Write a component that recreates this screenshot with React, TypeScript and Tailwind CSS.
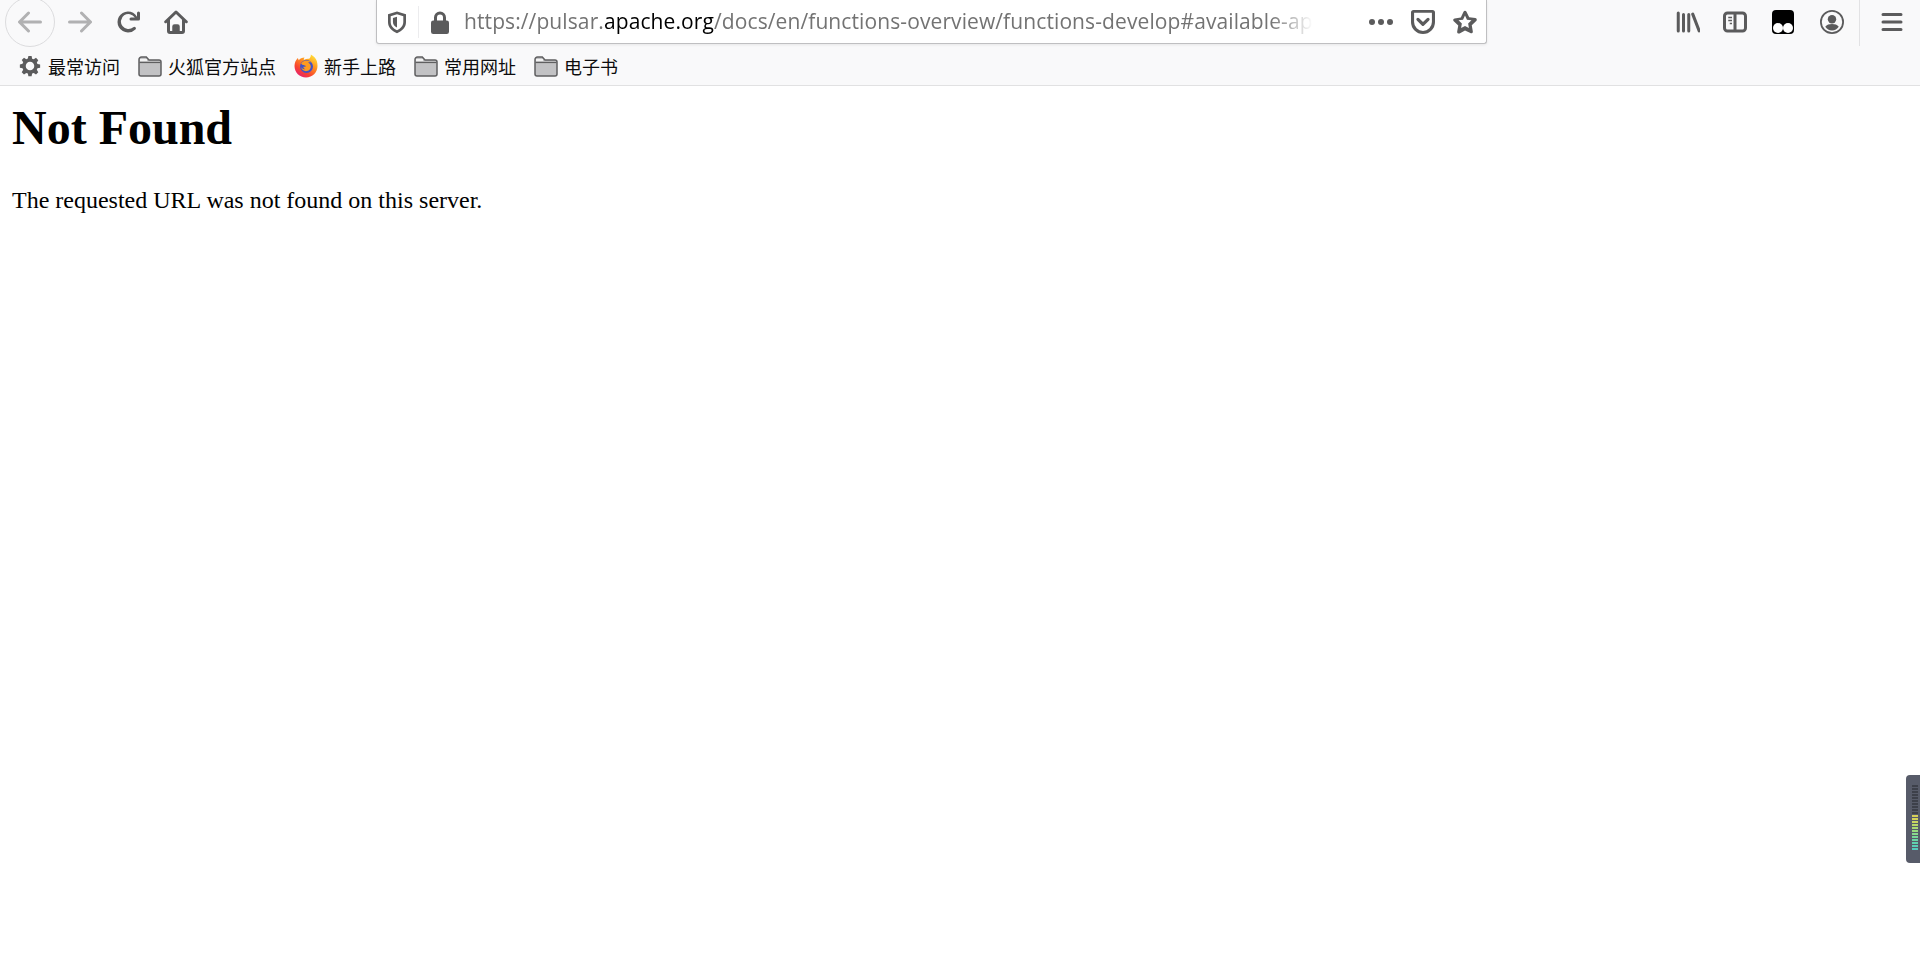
import React from "react";

const Ico = ({ children, className = "", box = "0 0 16 16" }: { children: React.ReactNode; className?: string; box?: string }) => (
  <svg viewBox={box} className={`w-6 h-6 shrink-0 ${className}`} fill="#5b5b5c">
    {children}
  </svg>
);

const Back = () => (
  <path d="M15 7H3.414l4.293-4.293a1 1 0 0 0-1.414-1.414l-6 6a1 1 0 0 0 0 1.414l6 6a1 1 0 0 0 1.414-1.414L3.414 9H15a1 1 0 0 0 0-2z" />
);
const Forward = () => (
  <path d="M1 7h11.586L8.293 2.707a1 1 0 0 1 1.414-1.414l6 6a1 1 0 0 1 0 1.414l-6 6a1 1 0 0 1-1.414-1.414L12.586 9H1a1 1 0 0 1 0-2z" />
);

const Folder = () => (
  <svg viewBox="0 0 24 22" className="w-6 h-[22px] shrink-0">
    <path d="M1 4.500A2.500 2.500 0 0 1 3.500 2h4.800l2.700 3h10a2 2 0 0 1 2 2v12a2 2 0 0 1-2 2H3a2 2 0 0 1-2-2z" fill="#c2c2c4" stroke="#5f5f60" strokeWidth="1.500" />
    <path d="M1.500 7.500h21" stroke="#5f5f60" strokeWidth="1.200" fill="none" />
    <path d="M2 5h7" stroke="#f2f2f2" strokeWidth="2" fill="none" />
  </svg>
);

const Firefox = () => (
  <svg viewBox="0 0 24 24" className="w-6 h-6 shrink-0">
    <defs>
      <linearGradient id="fx" x1="0.85" y1="0.05" x2="0.25" y2="0.95">
        <stop offset="0" stopColor="#ffe03c" />
        <stop offset="0.35" stopColor="#ff9a1f" />
        <stop offset="0.75" stopColor="#f8442f" />
        <stop offset="1" stopColor="#e8246a" />
      </linearGradient>
    </defs>
    <path d="M12 23.500C5.600 23.500.5 18.400.5 12c0-3.200 1.300-6 3.300-8l1 2.300C6 4.600 8.200 3.700 10.500 3.600c-.6 1-.8 1.700-.7 2.300 2-1 3.800-1.400 5.400-1.100C16.500 3.500 17 2 16.800.5c3.300 1.800 5.200 3.900 6 6.600.5 1.500.7 3.200.7 4.900 0 6.400-5.100 11.500-11.500 11.500z" fill="url(#fx)" />
    <circle cx="12.500" cy="12.500" r="6.500" fill="#3f51c8" />
    <path d="M7 10c1-2.300 3-3.500 5.500-3.500 2 0 3.500.7 4.500 2-1-.3-2-.4-2.900-.1 1.700.8 2.700 2.300 2.700 4.100 0 2.600-2.100 4.700-4.800 4.700-2.500 0-4.400-1.600-4.800-3.900 1 1.400 2.500 2.200 4.200 1.900-1.200-.5-2-1.400-2.100-2.500 1 .2 2.100-.1 2.700-.8-1.100-.3-1.800-.4-2.200-.9-.7.2-1.600 0-2.300-1z" fill="#ff9a1f" />
  </svg>
);

const Bookmark = ({ icon, label }: { icon: React.ReactNode; label: string }) => (
  <div className="flex items-center gap-[6px]">
    {icon}
    <span className="text-[18px] leading-6 text-[#0c0c0d] [font-family:'Noto_Sans_CJK_SC',sans-serif]">{label}</span>
  </div>
);

const meter = ["#3d404a","#3d404a","#3d404a","#3d404a","#3d404a","#3d404a","#3d404a","#3d404a","#3d404a","#3d404a","#d6cf58","#d4d35a","#c9d660","#b8d868","#a8da72","#98db7e","#88da8c","#78d898","#6ad6a4","#60d2ae","#5acfb6","#56cbbc"];

export default function App() {
  return (
    <div className="relative h-screen overflow-hidden bg-white">
      <header className="bg-[#f9f9fa] border-b border-[#e1e1e2] h-[86px]">
        {/* Navigation toolbar */}
        <div className="flex items-start h-[44px]">
          <div className="ml-[5px] -mt-[3px] w-[50px] h-[50px] rounded-full border border-[#dcdcde] flex items-center justify-center shrink-0">
            <Ico className="opacity-45"><Back /></Ico>
          </div>
          <Ico className="ml-[13px] mt-[10px] opacity-45"><Forward /></Ico>
          <Ico className="ml-[24px] mt-[10px]">
            <path d="M15 1a1 1 0 0 0-1 1v2.418A6.995 6.995 0 1 0 8 15a6.954 6.954 0 0 0 4.950-2.050 1 1 0 0 0-1.414-1.414A5.019 5.019 0 1 1 12.549 5H10a1 1 0 0 0 0 2h5a1 1 0 0 0 1-1V2a1 1 0 0 0-1-1z" />
          </Ico>
          <Ico className="ml-[24px] mt-[10px]">
            <path d="M15.700 7.300 8.700.6a1 1 0 0 0-1.400 0L.3 7.300a1 1 0 0 0 1.200 1.500l.5-.4V14a2 2 0 0 0 2 2h8a2 2 0 0 0 2-2V8.400l.5.4a1 1 0 0 0 1.200-1.500zM12 14h-1.500v-3a1.500 1.500 0 0 0-1.500-1.500H7A1.500 1.500 0 0 0 5.500 11v3H4V6.500l4-3.800 4 3.800z" />
            <path d="M7 11h2v3.500H7z" />
          </Ico>

          {/* URL bar */}
          <div className="ml-[188px] w-[1111px] h-[44px] shrink-0 flex items-center bg-white border border-t-0 border-[#bfbfc1] rounded-b-[3px] shadow-[0_1px_3px_rgba(0,0,0,0.08)]">
            <Ico className="ml-[8px]">
              <path fillRule="evenodd" d="M8 1 2 2.800V8c0 3.500 2.400 6 6 7.500 3.600-1.500 6-4 6-7.500V2.800zm0 1.800 4.200 1.300V8c0 2.500-1.600 4.300-4.200 5.500-2.600-1.200-4.200-3-4.200-5.500V4.100zM8 4.500 5.300 5.300V8c0 1.600 1 2.800 2.700 3.600z" />
            </Ico>
            <div className="ml-[9px] w-px h-[32px] bg-[#ececee]" />
            <Ico className="ml-[9px]">
              <path d="M12.500 7H12V5a4 4 0 0 0-8 0v2h-.5A1.500 1.500 0 0 0 2 8.500v6A1.500 1.500 0 0 0 3.500 16h9a1.500 1.500 0 0 0 1.500-1.500v-6A1.500 1.500 0 0 0 12.500 7zM6 5a2 2 0 0 1 4 0v2H6z" />
            </Ico>
            <div className="ml-[12px] mt-[1px] w-[849px] overflow-hidden whitespace-nowrap text-[21px] tracking-[0.1px] text-[#737373] [font-family:'Open_Sans',sans-serif] [mask-image:linear-gradient(to_right,black_95%,transparent)]">
              https://pulsar.<span className="text-black">apache.org</span>/docs/en/functions-overview/functions-develop#available-ap
            </div>
            <div className="ml-[56px] flex items-center gap-[3px]">
              <span className="w-[6px] h-[6px] rounded-full bg-[#5b5b5c]" />
              <span className="w-[6px] h-[6px] rounded-full bg-[#5b5b5c]" />
              <span className="w-[6px] h-[6px] rounded-full bg-[#5b5b5c]" />
            </div>
            <Ico className="ml-[18px]" box="1 1 14 14">
              <path fillRule="evenodd" d="M2.500 1h11A1.500 1.500 0 0 1 15 2.500V8a7 7 0 0 1-14 0V2.500A1.500 1.500 0 0 1 2.500 1zm.3 1.600H13.200V8a5.200 5.200 0 0 1-10.400 0z" />
              <path d="M5.700 5.800 8 8l2.300-2.200a.9.900 0 0 1 1.300 1.300L8.600 10a.9.900 0 0 1-1.300 0L4.400 7.100a.9.900 0 0 1 1.300-1.300z" />
            </Ico>
            <Ico className="ml-[18px]">
              <path fillRule="evenodd" d="M8 .5c.4 0 .8.200 1 .6l1.800 3.700 4.100.6c.9.100 1.300 1.200.6 1.900l-3 2.900.7 4c.2.900-.8 1.600-1.600 1.200L8 13.700l-3.600 1.900c-.8.400-1.800-.3-1.600-1.200l.7-4-3-2.900c-.7-.7-.3-1.800.6-1.900l4.100-.6L7 1.100c.2-.4.600-.6 1-.6zm0 3.200L6.700 6.500l-3 .4 2.200 2.100-.5 3L8 10.600l2.600 1.400-.5-3 2.200-2.100-3-.4z" />
            </Ico>
          </div>

          {/* Right toolbar */}
          <Ico className="ml-[189px] mt-[10px]">
            <path d="M1.500 1a1 1 0 0 1 1 1v12a1 1 0 0 1-2 0V2a1 1 0 0 1 1-1zm3.500 1a1 1 0 0 1 1 1v11a1 1 0 0 1-2 0V3a1 1 0 0 1 1-1zm3.500 0a1 1 0 0 1 1 1v11a1 1 0 0 1-2 0V3a1 1 0 0 1 1-1zm2.300-.2a1 1 0 0 1 1.300.5l4.300 11.300a1 1 0 0 1-1.900.7L10.200 3.100a1 1 0 0 1 .6-1.300z" />
          </Ico>
          <Ico className="ml-[23px] mt-[10px]">
            <path fillRule="evenodd" d="M3 1h10a3 3 0 0 1 3 3v8a3 3 0 0 1-3 3H3a3 3 0 0 1-3-3V4a3 3 0 0 1 3-3zm0 2a1 1 0 0 0-1 1v8a1 1 0 0 0 1 1h4V3zm6 0v10h4a1 1 0 0 0 1-1V4a1 1 0 0 0-1-1z" />
            <path d="M3.500 4.500h2.500v1H3.500zm0 2h2.500v1H3.500zm1 2h1.500v1H4.500z" />
          </Ico>
          <svg viewBox="0 0 24 24" className="ml-[24px] mt-[10px] w-6 h-6 shrink-0">
            <path d="M5 0h14a4 4 0 0 1 4 4v16a4 4 0 0 1-4 4H5a4 4 0 0 1-4-4V4a4 4 0 0 1 4-4z" fill="#000" />
            <circle cx="7" cy="18" r="5" fill="#fff" />
            <circle cx="17" cy="18" r="5" fill="#fff" />
          </svg>
          <Ico className="ml-[25px] mt-[10px]">
            <path fillRule="evenodd" d="M8 0a8 8 0 1 1 0 16A8 8 0 0 1 8 0zm0 1.200a6.800 6.800 0 1 0 0 13.600A6.800 6.800 0 0 0 8 1.200z" />
            <circle cx="8" cy="6.200" r="2.800" />
            <path d="M3.500 11.200C4.500 9.800 6 9.400 8 9.400s3.500.4 4.500 1.800A5.700 5.700 0 0 1 8 13.700a5.700 5.700 0 0 1-4.500-2.500z" />
          </Ico>
          <div className="ml-[15px] w-px h-[46px] bg-[#e2e2e4] shrink-0" />
          <Ico className="ml-[20px] mt-[10px]">
            <path d="M2 2h12a1 1 0 0 1 0 2H2a1 1 0 0 1 0-2zm0 5h12a1 1 0 0 1 0 2H2a1 1 0 0 1 0-2zm0 5h12a1 1 0 0 1 0 2H2a1 1 0 0 1 0-2z" />
          </Ico>
        </div>

        {/* Bookmarks toolbar */}
        <div className="flex items-center gap-[18px] pl-[18px] pt-[10px]">
          <Bookmark
            label="最常访问"
            icon={
              <Ico box="-1 -1 18 18">
                <path fillRule="evenodd" d="M6.800.5h2.400l.4 2 1.200.5 1.700-1.100 1.700 1.700-1.100 1.700.5 1.200 2 .4v2.400l-2 .4-.5 1.200 1.100 1.700-1.700 1.700-1.700-1.100-1.200.5-.4 2H6.800l-.4-2-1.200-.5-1.700 1.100-1.700-1.700 1.100-1.700-.5-1.200-2-.4V6.800l2-.4.5-1.200-1.100-1.700 1.700-1.700 1.700 1.100 1.200-.5zM8 4.800a3.200 3.200 0 1 0 0 6.400 3.200 3.200 0 0 0 0-6.400z" />
              </Ico>
            }
          />
          <Bookmark label="火狐官方站点" icon={<Folder />} />
          <Bookmark label="新手上路" icon={<Firefox />} />
          <Bookmark label="常用网址" icon={<Folder />} />
          <Bookmark label="电子书" icon={<Folder />} />
        </div>
      </header>

      {/* Page */}
      <main className="pt-[14px] pl-[12px] text-black [font-family:'Liberation_Serif',serif]">
        <h1 className="text-[48px] font-bold leading-[55px]">Not Found</h1>
        <p className="mt-[32px] text-[24px] leading-[27px]">The requested URL was not found on this server.</p>
      </main>

      {/* Floating meter widget */}
      <div className="absolute right-0 top-[775px] w-[14px] h-[88px] bg-[#575b69] rounded-l-[4px] flex flex-col gap-px items-end pt-[10px] pr-[2px]">
        {meter.map((c, i) => (
          <span key={i} className="block w-[6px] h-[2px]" style={{ backgroundColor: c }} />
        ))}
      </div>
    </div>
  );
}
